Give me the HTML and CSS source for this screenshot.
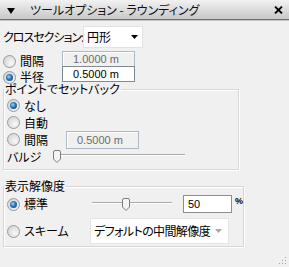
FILE: index.html
```html
<!DOCTYPE html>
<html lang="ja">
<head>
<meta charset="utf-8">
<title>ツールオプション - ラウンディング</title>
<link rel="stylesheet" href="styles.css">
</head>
<body>
<div class="panel">
  <div class="titlebar">
    <svg class="collapse" width="8" height="6" viewBox="0 0 8 6"><path d="M0 0H8L4 6Z" fill="#000"/></svg>
    <span class="title">ツールオプション - ラウンディング</span>
    <svg class="close" width="9" height="8" viewBox="0 0 9 8"><path d="M1 0.5L8 7.5M8 0.5L1 7.5" stroke="#000" stroke-width="1.8"/></svg>
  </div>
  <div class="content">
    <div class="cross">
      <span class="cross-label">クロスセクション:</span>
      <div class="select shape"><span>円形</span><svg class="arrow" width="7" height="4" viewBox="0 0 7 4"><path d="M0 0H7L3.5 4Z" fill="#000"/></svg></div>
    </div>
    <div class="pair">
      <div class="radios">
        <div class="opt"><span class="radio"></span>間隔</div>
        <div class="opt"><span class="radio on"></span>半径</div>
      </div>
      <div class="inputs">
        <div class="field disabled">1.0000 m</div>
        <div class="field">0.5000 m</div>
      </div>
    </div>
    <fieldset class="group g1">
      <legend>ポイントでセットバック</legend>
      <div class="grow"><div class="opt"><span class="radio on"></span>なし</div></div>
      <div class="grow"><div class="opt"><span class="radio"></span>自動</div></div>
      <div class="grow"><div class="opt w59"><span class="radio"></span>間隔</div><div class="field disabled tall">0.5000 m</div></div>
      <div class="grow"><div class="opt w46">バルジ</div>
        <div class="slider s1"><span class="track"></span><svg class="thumb" width="8" height="13" viewBox="0 0 8 13"><path d="M0.5 2Q0.5 0.5 2 0.5H6Q7.5 0.5 7.5 2V9L4 12.5L0.5 9Z" fill="#f4f4f4" stroke="#7d7d7d"/></svg></div>
      </div>
    </fieldset>
    <fieldset class="group g2">
      <legend>表示解像度</legend>
      <div class="grow r1">
        <div class="opt w83"><span class="radio on"></span>標準</div>
        <div class="slider s2"><span class="track"></span><svg class="thumb" width="8" height="13" viewBox="0 0 8 13"><path d="M0.5 2Q0.5 0.5 2 0.5H6Q7.5 0.5 7.5 2V9L4 12.5L0.5 9Z" fill="#f4f4f4" stroke="#7d7d7d"/></svg></div>
        <div class="field num">50</div>
        <span class="pct">%</span>
      </div>
      <div class="grow r2">
        <div class="opt w83"><span class="radio"></span>スキーム</div>
        <div class="select scheme"><span class="scheme-text">デフォルトの中間解像度</span><svg class="arrow" width="7" height="4" viewBox="0 0 7 4"><path d="M0 0H7L3.5 4Z" fill="#a8a8a8"/></svg></div>
      </div>
    </fieldset>
  </div>
  <svg class="grip" width="8" height="9" viewBox="0 0 8 9">
    <rect x="6" y="1" width="1" height="1" fill="#a0a0a0"/>
    <rect x="3" y="4" width="1" height="1" fill="#a0a0a0"/><rect x="6" y="4" width="1" height="1" fill="#a0a0a0"/>
    <rect x="0" y="7" width="1" height="1" fill="#a0a0a0"/><rect x="3" y="7" width="1" height="1" fill="#a0a0a0"/><rect x="6" y="7" width="1" height="1" fill="#a0a0a0"/>
  </svg>
</div>
</body>
</html>
```
FILE: styles.css
```css
* { box-sizing: border-box; }
html, body { margin: 0; padding: 0; }
body {
  width: 289px;
  height: 267px;
  overflow: hidden;
  background: #f0f0f0;
  font-family: "Noto Sans CJK JP", "Liberation Sans", sans-serif;
  font-size: 12px;
  line-height: 14px;
  color: #000;
  font-feature-settings: "palt";
  white-space: nowrap;
}
.panel { position: relative; width: 289px; height: 267px; }
.titlebar {
  height: 20px;
  display: flex;
  align-items: center;
  background: linear-gradient(#f2f2f2, #d4d4d4 70%, #c8c8c8);
  border-bottom: 1px solid #6f6f6f;
  box-shadow: 0 1px 0 #c4c4c4;
}
.collapse { margin-left: 7px; margin-top: 3px; }
.title { margin-left: 15px; font-size: 12px; color: #111; }
.close { margin-left: auto; margin-right: 6px; }
.content { padding: 0 0 0 3px; }
.cross { display: flex; align-items: center; height: 22px; margin-top: 6px; }
.cross-label { width: 80px; letter-spacing: -1px; }
.select {
  display: flex; align-items: center; background: #fff;
  border: 1px solid #e2e2e2; padding-left: 3px;
}
.select .arrow { margin-left: auto; flex: none; }
.shape { width: 60px; height: 22px; }
.shape .arrow { margin-right: 4px; }
.pair { display: flex; margin-top: 3px; }
.radios { width: 59px; padding-top: 2px; }
.radios .opt { line-height: 12px; }
.opt { display: flex; align-items: center; height: 16px; }
.radio {
  position: relative;
  flex: none;
  width: 13px; height: 13px;
  margin-right: 4px;
  border-radius: 50%;
  border: 1px solid #9a9a9a;
  background: radial-gradient(circle at 65% 65%, #f8f8f8, #dadada 70%, #cfcfcf);
}
.radio.on::after {
  content: "";
  position: absolute;
  left: 2px; top: 2px; width: 7px; height: 7px;
  border-radius: 50%;
  background: radial-gradient(circle at 40% 40%, #9ed6f6, #2a74b4 45%, #0c3a6a);
}
.inputs { display: flex; flex-direction: column; }
.field {
  width: 73px; height: 16px;
  border: 1px solid #7f8a96;
  background: #fff;
  font-family: "Liberation Sans", sans-serif;
  font-size: 11px;
  line-height: 14px;
  padding-left: 10px;
  font-feature-settings: normal;
}
.field + .field { margin-top: -1px; }
.field.disabled { background: #f0f0f0; border-color: #adb9c7; color: #6d6d6d; box-shadow: inset 1px 1px 0 #fff; }
.field.tall { height: 18px; line-height: 16px; }
.group {
  margin: 0;
  width: 236px;
  border: 1px solid #d6d6d6;
  box-shadow: inset 1px 1px 0 #fff, 1px 1px 0 #fff;
  padding: 0 0 5px 3px;
}
.group legend { padding: 0 1px; margin-left: -3px; line-height: 12px; }
.g1 { margin-top: -2px; padding-top: 2px; padding-bottom: 4px; }
.g1 .grow { height: 17px; }
.grow { display: flex; align-items: center; }
.w59 { width: 59px; }
.w46 { width: 46px; }
.w83 { width: 83px; }
.slider { position: relative; height: 13px; }
.track {
  position: absolute; left: 0; right: 0; top: 4px; height: 2px;
  border-top: 1px solid #a9a9a9; border-bottom: 1px solid #fff;
}
.thumb { position: absolute; top: 0; }
.s1 { width: 132px; }
.s1 .thumb { left: 0; }
.g2 { margin-top: 10px; padding-top: 2px; padding-bottom: 2px; }
.r1 { height: 20px; }
.s2 { width: 80px; margin-left: 2px; }
.s2 .thumb { left: 30px; }
.num { width: 49px; height: 18px; line-height: 16px; padding-left: 4px; margin-left: 11px; border-color: #8d8d8d; }
.pct { font-family: "Liberation Sans", sans-serif; font-size: 9px; font-weight: bold; margin-left: 3px; margin-top: -6px; }
.r2 { height: 26px; margin-top: 4px; }
.scheme { width: 139px; height: 26px; border-color: #e4e4e4; padding-left: 3px; }
.scheme-text { letter-spacing: -0.6px; }
.scheme .arrow { margin-right: 6px; }
.grip { position: absolute; right: 2px; bottom: 2px; }
```
